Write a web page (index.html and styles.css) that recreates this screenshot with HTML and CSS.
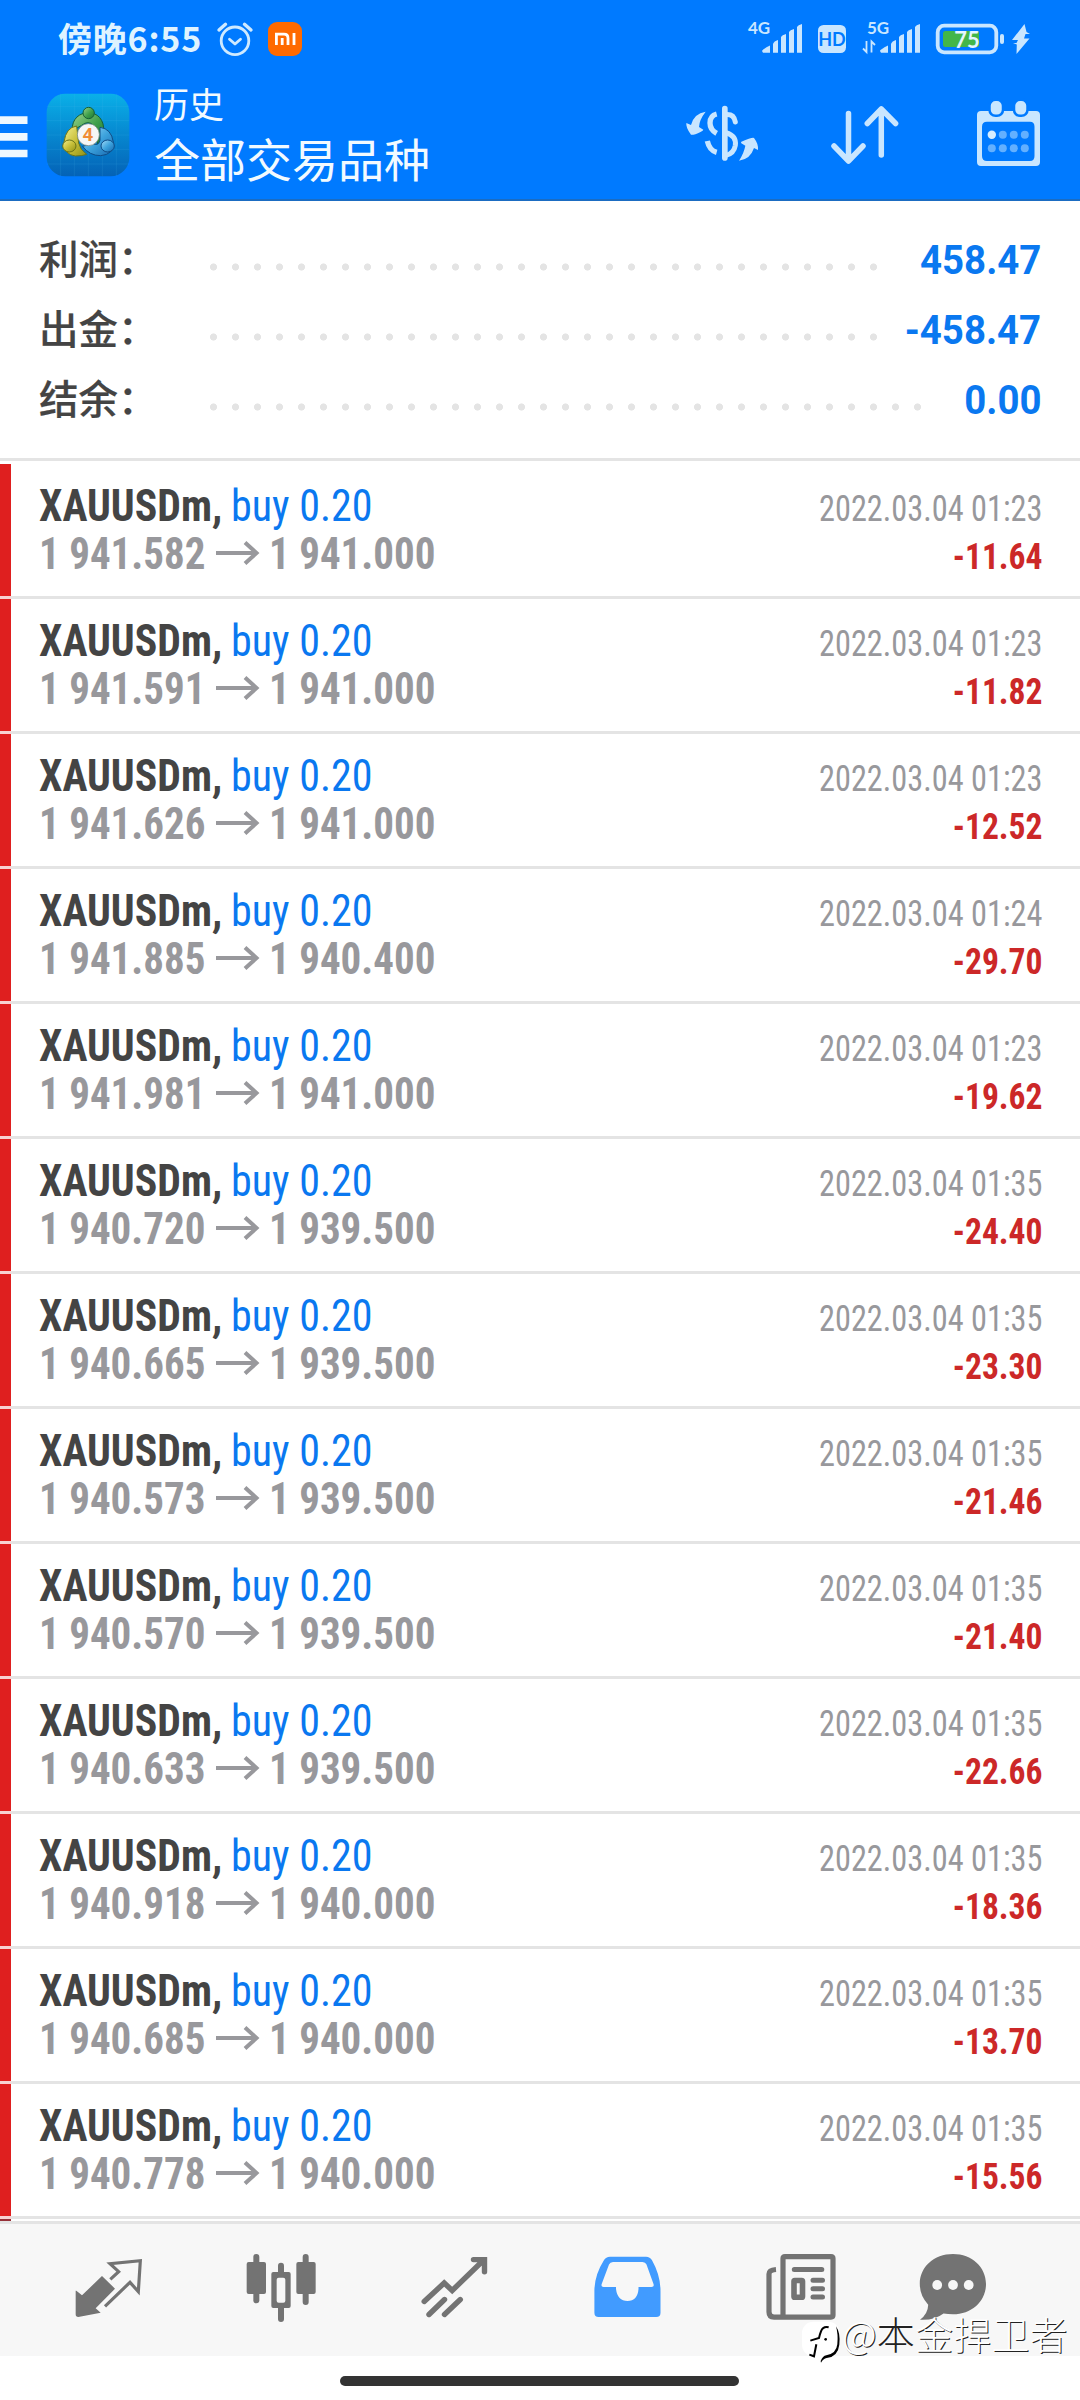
FILE: index.html
```html
<!DOCTYPE html>
<html lang="zh-CN">
<head>
<meta charset="utf-8">
<title>历史</title>
<link rel="stylesheet" href="styles.css">
</head>
<body>
<header class="header">
  <div class="status">
    <span class="clock">傍晚6:55</span>
    <svg class="alarm" viewBox="216 20 38 38" width="38" height="38" fill="none" stroke="#cfeaff" stroke-width="2.8" stroke-linecap="round" stroke-linejoin="round"><circle cx="235" cy="40.8" r="13.8"/><path d="M229.5 39.2l5.5 4.8 5.5-4.8"/><path stroke-width="3.4" d="M219 30l6.5-5.7M251 30l-6.5-5.7"/></svg>
    <svg class="mi" viewBox="268 22 34 34" width="34" height="34"><rect x="268" y="22" width="34" height="34" rx="9" fill="#ff6a00"/><path d="M276.4 45V34.2h7.6q4 0 4 4V45M282.2 38v7M294 33v12" fill="none" stroke="#fff" stroke-width="2.8"/></svg>
    <div class="status-right">
      <svg viewBox="745 10 60 48" width="60" height="48" fill="#c9e6ff"><text class="net" x="748" y="34">4G</text><path d="M762 51q0-1.500 8-5.500V52.700H763zM773 44q1-3 5-4V52.700H773zM781 37q1-2 5-3V52.700H781zM789 32q1-2 5-3V52.700H789zM797 27q1-2 5-3V52.700H797z"/></svg>
      <svg class="hd" viewBox="818 10 28 48" width="28" height="48"><rect x="818" y="25" width="28" height="28" rx="5.500" fill="#c9e6ff"/><text class="hd-text" x="832" y="46.200" text-anchor="middle">HD</text></svg>
      <svg class="five" viewBox="860 10 64 48" width="64" height="48" fill="#c9e6ff"><text class="net" x="867" y="34">5G</text><path d="M880 51q0-1.500 8-5.500V52.700H881zM891 44q1-3 5-4V52.700H891zM899 37q1-2 5-3V52.700H899zM907 32q1-2 5-3V52.700H907zM915 27q1-2 5-3V52.700H915z"/><path d="M866.500 41V52l-3.500-3.500M871.500 52.500V41.500l3.500 3.500" fill="none" stroke="#c9e6ff" stroke-width="1.800"/></svg>
      <svg class="battery" viewBox="934 10 72 48" width="72" height="48"><rect x="937.700" y="25.700" width="58.600" height="26.600" rx="6.500" fill="none" stroke="#c9e6ff" stroke-width="3.800"/><rect x="943" y="31" width="36" height="16" rx="2.500" fill="#43b649"/><rect x="1000" y="34" width="4" height="10" rx="2" fill="#c9e6ff"/><text class="bat-text" x="967" y="47.800" text-anchor="middle">75</text></svg>
      <svg viewBox="1008 10 24 48" width="24" height="48"><path d="M1024.500 24L1012 40h6l-1.500 3h-3.500l3.800 1.500-.3 9.500 13-15.500h-5.500l1.500-4.500h4.500l-3.500-2z" fill="#c9e6ff"/></svg>
    </div>
  </div>
  <div class="toolbar">
    <svg class="burger" viewBox="0 80 28 119" width="28" height="119" fill="#eef8ff"><path d="M0 116.300h27.500v7.800H0zM0 133h27.500v7.700H0zM0 149.700h27.500v7.500H0z"/></svg>
    <svg class="app" viewBox="18 15 252 252" width="84" height="84">
      <defs>
        <linearGradient id="tile" x1="0" y1="0" x2="0" y2="1"><stop offset="0" stop-color="#0ab0e8"/><stop offset=".45" stop-color="#078bd2"/><stop offset="1" stop-color="#0462b6"/></linearGradient>
        <linearGradient id="gr" x1="0" y1="0" x2="1" y2="1"><stop offset="0" stop-color="#9cd48c"/><stop offset=".55" stop-color="#3f9f4b"/><stop offset="1" stop-color="#1d7732"/></linearGradient>
        <linearGradient id="ye" x1="0" y1="0" x2="1" y2="1"><stop offset="0" stop-color="#f4ef8f"/><stop offset=".5" stop-color="#c8c03a"/><stop offset="1" stop-color="#8f9015"/></linearGradient>
        <linearGradient id="bl" x1="0" y1="0" x2="1" y2="1"><stop offset="0" stop-color="#a5dcf8"/><stop offset=".5" stop-color="#3da3dd"/><stop offset="1" stop-color="#1668b0"/></linearGradient>
      </defs>
      <rect x="20" y="17" width="248" height="248" rx="56" fill="url(#tile)"/>
      <path d="M62 17v248M103 17v248M145 17v248M187 17v248M229 17v248M20 55h248M20 98h248M20 141h248M20 184h248M20 228h248" stroke="#53c4f2" stroke-opacity=".2" stroke-width="2"/>
      <g stroke-width="3">
        <path d="M97 128C94 92 120 74 145 74s50 18 46 62q-2 20-18 32L160 112Q145 96 125 112z" fill="url(#gr)" stroke="#165f35"/>
        <path d="M180 118q34 4 40 44 2 38-38 41-34 0-54-28l30-8q18 8 22-10z" fill="url(#bl)" stroke="#0f4c86"/>
        <path d="M110 114q-32 4-38 48 0 38 34 42 22 0 34-5-20-14-24-34z" fill="url(#ye)" stroke="#6b7418"/>
        <circle cx="146" cy="75" r="17" fill="url(#gr)" stroke="#165f35"/>
        <ellipse cx="88" cy="174" rx="20" ry="18" fill="url(#ye)" stroke="#6b7418"/>
        <ellipse cx="203" cy="174" rx="20" ry="18" fill="url(#bl)" stroke="#0f4c86"/>
      </g>
      <circle cx="145" cy="140" r="33" fill="#f6f6f6" stroke="#6a8078" stroke-width="2"/>
      <text class="four" x="144" y="160" text-anchor="middle">4</text>
    </svg>
    <div class="titles"><div class="title-small">历史</div><div class="title-big">全部交易品种</div></div>
    <svg class="act" viewBox="0 0 300 240" width="100" height="80" fill="none" stroke="#c9e6ff" stroke-linecap="round"><path stroke-width="17" d="M164.500 41v148"/><path stroke-width="15" d="M168 59q24-2 28 22M168 113q32 10 28 38-4 24-28 30"/><path stroke-width="16" stroke-linecap="butt" d="M140 57q-20 5-20 27 0 20 20 31M112 138q6 28 28 34"/><path fill="#c9e6ff" stroke="none" d="M107 50Q72 55 63 90L49 84q-2 14 14 35 5 3 30-9 8-4 7-6L87 96q1-22 20-46zM207 197q34-4 45-38l12 6q2-18-12-36-5-3-38 11-2 3 0 5l12 7q-4 22-19 45z"/></svg>
    <svg class="act sort" viewBox="828 95 74 80" width="74" height="80" fill="none" stroke="#c9e6ff" stroke-width="5.500" stroke-linecap="round" stroke-linejoin="round"><path d="M848.500 113.500V160M834 146l14.500 15 14.500-15M881.300 155V109M867.300 123.500l14-14.500 14.300 14.500"/></svg>
    <svg class="act cal" viewBox="972 95 74 80" width="74" height="80"><path fill="#c9e6ff" fill-rule="evenodd" d="M981 111h55q4 0 4 4v47q0 4-4 4h-55q-4 0-4-4v-47q0-4 4-4zM987 121.700q-5 0-5 5V156q0 5 5 5h43q4.500 0 4.500-5v-29.300q0-5-4.500-5z"/><g fill="#c9e6ff" stroke="#007aff" stroke-width="2.500"><rect x="989.500" y="99.800" width="13.500" height="16" rx="6"/><rect x="1014" y="99.800" width="13.500" height="16" rx="6"/></g><g fill="#63b0ff"><circle cx="991.800" cy="134.700" r="4.200" fill="#d8eeff"/><circle cx="1002.800" cy="134.700" r="4"/><circle cx="1013.800" cy="134.700" r="4"/><circle cx="1024.800" cy="134.700" r="4"/><circle cx="991.800" cy="148.300" r="4"/><circle cx="1002.800" cy="148.300" r="4"/><circle cx="1013.800" cy="148.300" r="4"/><circle cx="1024.800" cy="148.300" r="4"/></g></svg>
  </div>
</header>
<section class="summary">
  <div class="sum-row"><span class="label">利润：</span><span class="dots"></span><span class="value">458.47</span></div>
  <div class="sum-row"><span class="label">出金：</span><span class="dots"></span><span class="value">-458.47</span></div>
  <div class="sum-row"><span class="label">结余：</span><span class="dots dots-long"></span><span class="value">0.00</span></div>
</section>
<svg class="defs" width="0" height="0"><symbol id="arrow" viewBox="0 0 44 26"><path d="M0 13h40M29 2.500L40.500 13 29 23.500" fill="none" stroke="#98989c" stroke-width="4"/></symbol></svg>
<main class="deals">
  <article class="deal"><div class="line"><b class="sym">XAUUSDm,</b><span class="side">buy 0.20</span><time class="time">2022.03.04 01:23</time></div><div class="line"><span class="price">1 941.582</span><svg class="arrow"><use href="#arrow"/></svg><span class="price">1 941.000</span><span class="loss">-11.64</span></div></article>
  <article class="deal"><div class="line"><b class="sym">XAUUSDm,</b><span class="side">buy 0.20</span><time class="time">2022.03.04 01:23</time></div><div class="line"><span class="price">1 941.591</span><svg class="arrow"><use href="#arrow"/></svg><span class="price">1 941.000</span><span class="loss">-11.82</span></div></article>
  <article class="deal"><div class="line"><b class="sym">XAUUSDm,</b><span class="side">buy 0.20</span><time class="time">2022.03.04 01:23</time></div><div class="line"><span class="price">1 941.626</span><svg class="arrow"><use href="#arrow"/></svg><span class="price">1 941.000</span><span class="loss">-12.52</span></div></article>
  <article class="deal"><div class="line"><b class="sym">XAUUSDm,</b><span class="side">buy 0.20</span><time class="time">2022.03.04 01:24</time></div><div class="line"><span class="price">1 941.885</span><svg class="arrow"><use href="#arrow"/></svg><span class="price">1 940.400</span><span class="loss">-29.70</span></div></article>
  <article class="deal"><div class="line"><b class="sym">XAUUSDm,</b><span class="side">buy 0.20</span><time class="time">2022.03.04 01:23</time></div><div class="line"><span class="price">1 941.981</span><svg class="arrow"><use href="#arrow"/></svg><span class="price">1 941.000</span><span class="loss">-19.62</span></div></article>
  <article class="deal"><div class="line"><b class="sym">XAUUSDm,</b><span class="side">buy 0.20</span><time class="time">2022.03.04 01:35</time></div><div class="line"><span class="price">1 940.720</span><svg class="arrow"><use href="#arrow"/></svg><span class="price">1 939.500</span><span class="loss">-24.40</span></div></article>
  <article class="deal"><div class="line"><b class="sym">XAUUSDm,</b><span class="side">buy 0.20</span><time class="time">2022.03.04 01:35</time></div><div class="line"><span class="price">1 940.665</span><svg class="arrow"><use href="#arrow"/></svg><span class="price">1 939.500</span><span class="loss">-23.30</span></div></article>
  <article class="deal"><div class="line"><b class="sym">XAUUSDm,</b><span class="side">buy 0.20</span><time class="time">2022.03.04 01:35</time></div><div class="line"><span class="price">1 940.573</span><svg class="arrow"><use href="#arrow"/></svg><span class="price">1 939.500</span><span class="loss">-21.46</span></div></article>
  <article class="deal"><div class="line"><b class="sym">XAUUSDm,</b><span class="side">buy 0.20</span><time class="time">2022.03.04 01:35</time></div><div class="line"><span class="price">1 940.570</span><svg class="arrow"><use href="#arrow"/></svg><span class="price">1 939.500</span><span class="loss">-21.40</span></div></article>
  <article class="deal"><div class="line"><b class="sym">XAUUSDm,</b><span class="side">buy 0.20</span><time class="time">2022.03.04 01:35</time></div><div class="line"><span class="price">1 940.633</span><svg class="arrow"><use href="#arrow"/></svg><span class="price">1 939.500</span><span class="loss">-22.66</span></div></article>
  <article class="deal"><div class="line"><b class="sym">XAUUSDm,</b><span class="side">buy 0.20</span><time class="time">2022.03.04 01:35</time></div><div class="line"><span class="price">1 940.918</span><svg class="arrow"><use href="#arrow"/></svg><span class="price">1 940.000</span><span class="loss">-18.36</span></div></article>
  <article class="deal"><div class="line"><b class="sym">XAUUSDm,</b><span class="side">buy 0.20</span><time class="time">2022.03.04 01:35</time></div><div class="line"><span class="price">1 940.685</span><svg class="arrow"><use href="#arrow"/></svg><span class="price">1 940.000</span><span class="loss">-13.70</span></div></article>
  <article class="deal"><div class="line"><b class="sym">XAUUSDm,</b><span class="side">buy 0.20</span><time class="time">2022.03.04 01:35</time></div><div class="line"><span class="price">1 940.778</span><svg class="arrow"><use href="#arrow"/></svg><span class="price">1 940.000</span><span class="loss">-15.56</span></div></article>
  <div class="deal-peek"></div>
</main>
<nav class="tabs">
  <svg viewBox="22 2224 173 132" width="173" height="132"><g transform="translate(60 2240) scale(.33333)"><path d="M49 152l17 14 60-58 39 38-58 59 15 13-67 13q-8 0-8-8v-71z" fill="#737373"/><path d="M151 118l25-23-26-24 91-9-6 93-25-28-75 72" fill="none" stroke="#737373" stroke-width="9.500"/></g></svg>
  <svg viewBox="195 2224 173 132" width="173" height="132"><g transform="translate(60 2240) scale(.33333)" fill="#737373"><rect x="560" y="66" width="58" height="96" rx="6"/><rect x="580" y="42" width="18" height="148" rx="9"/><rect x="709" y="66" width="58" height="96" rx="6"/><rect x="728" y="42" width="18" height="153" rx="9"/><rect x="634" y="96" width="58" height="108" rx="6"/><rect x="654" y="68" width="18" height="178" rx="9"/><rect x="650" y="113" width="26" height="75" rx="6" fill="#f7f7f7"/></g></svg>
  <svg viewBox="368 2224 173 132" width="173" height="132" fill="none" stroke="#737373" stroke-width="5.400" stroke-linecap="round"><path d="M424.200 2301.500l20-18.500 8 7.500 31.500-30.500M473.500 2259.600h11v12.200M429 2314.500l15.500-15M444.500 2314.500l15.800-15"/></svg>
  <svg viewBox="541 2224 173 132" width="173" height="132"><path fill="#419bff" fill-rule="evenodd" d="M610 2256.700h36q4 0 6 3.500 8.500 15 8.500 31v21.500q0 4.300-4.300 4.300h-57.500q-4.300 0-4.300-4.300v-21.500q0-16 9.500-31 2-3.500 6.100-3.500zM613 2262q-3 0-4 2.500l-7.300 19.500q-1 3 1.800 3H616v2q1.500 12 11.500 12t11-12v-2h13q3 0 2-3l-7-19.500q-1-2.500-4-2.500z"/></svg>
  <svg viewBox="714 2224 173 132" width="173" height="132" fill="none" stroke="#737373"><path stroke-width="5.200" d="M785 2256.600h46q2 0 2 2v56.500q0 2-2 2h-57q-5 0-5-5V2274q0-4 7-4.500"/><path stroke-width="5.200" d="M783 2317v-58.500q0-2 2-2"/><path stroke-width="5" stroke-linecap="round" d="M794.300 2269.500h27.500M813 2280.300h9.500M813 2288.700h9.500M813 2297h9.500"/><rect x="794" y="2280.500" width="8.500" height="16.700" rx=".8" stroke-width="5.600"/></svg>
  <svg viewBox="887 2224 173 132" width="173" height="132"><path fill="#737373" d="M953 2254c19 0 33 13 33 30s-14 30.300-33 30.300q-5 0-9.500-.8-9 7-23.500 6.200 8-6 8.200-15-8.400-9-8.400-20.700c0-17 14-30 33.200-30z"/><g fill="#f7f7f7"><circle cx="937.200" cy="2285" r="4.900"/><circle cx="953" cy="2285" r="4.900"/><circle cx="968.700" cy="2285" r="4.900"/></g></svg>
</nav>
<footer class="home"><div class="home-bar"></div></footer>
<div class="mark"><svg viewBox="30 28 120 136" width="40" height="45.300"><rect x="33" y="36" width="113" height="104" rx="34" fill="#fff"/><path d="M135 50q14 20 10 55-4 36-38 40-10 2-17 14l-1-5q6-15 17-17 30-5 33-33 3-30-4-54z"/><path d="M113 53q-17-4-23 12-4 10-6 20l-26 8M76 104l-7 36-14-5" fill="none" stroke="#000" stroke-width="6"/><circle cx="104" cy="89" r="4"/></svg><span>@<span class="mark-dark">本</span>金捍卫者</span></div>
</body>
</html>
```
FILE: styles.css
```css
* { box-sizing: border-box; }
body { margin: 0; width: 1080px; height: 2400px; position: relative; overflow: hidden; background: #fff; font-family: Roboto, "Noto Sans CJK SC", sans-serif; }
svg { display: block; flex: none; }
.defs { display: none; }

.header { height: 201px; background: #007aff; border-bottom: 2px solid #1b6cc2; }
.status { height: 80px; display: flex; align-items: flex-start; padding: 10px 48px 0 58px; }
.clock { width: 158px; margin-top: 9px; font: 700 34px/38px "Noto Sans CJK SC", sans-serif; color: #dff3ff; white-space: nowrap; letter-spacing: .8px; }
.alarm { margin-top: 10px; }
.mi { margin: 12px 0 0 14px; }
.status-right { margin-left: auto; display: flex; }
.hd { margin-left: 13px; }
.five { margin-left: 14px; }
.battery { margin: 0 2px 0 10px; }
.net { font: 700 17px Lato, sans-serif; }
.hd-text { font: 700 18px Lato, sans-serif; fill: #007aff; }
.bat-text { font: 700 22px Lato, sans-serif; fill: #e4f5ff; }

.toolbar { height: 119px; display: flex; align-items: flex-start; padding-right: 34px; }
.app { margin: 13px 0 0 18px; }
.four { font: 700 54px "Open Sans", sans-serif; fill: #f08c35; }
.titles { margin-left: 24px; width: 516px; font-family: "Noto Sans CJK SC", sans-serif; color: #f2faff; }
.title-small { font-size: 35px; line-height: 45px; }
.title-big { font-size: 46px; line-height: 64px; }
.act { margin-top: 15px; }
.sort { margin-left: 58px; }
.cal { margin-left: 70px; }

.summary { height: 260px; padding: 21px 39px 0; border-bottom: 3px solid #e4e4e4; }
.sum-row { height: 70px; line-height: 70px; display: flex; align-items: baseline; }
.label { width: 170px; font: 500 39.500px/70px "Noto Sans CJK SC", sans-serif; color: #444; white-space: nowrap; -webkit-text-stroke: .2px #444; }
.dots { width: 682px; height: 8px; align-self: center; margin-top: 20px; background: radial-gradient(circle at 4.500px 4px, #e4e4e4 3.200px, transparent 3.900px) 0 0 / 22px 8px repeat-x; }
.dots-long { width: 726px; }
.value { margin-left: auto; font-size: 40px; font-weight: 700; color: #0a78f0; transform: scaleX(.96); transform-origin: right; }

.deals { padding-top: 3px; font-family: "Roboto Condensed", sans-serif; }
.deal { height: 135px; padding: 18px 38px 0 28px; border-left: 11px solid #df1f1f; position: relative; }
.deal::after { content: ""; position: absolute; left: -11px; right: 0; bottom: 0; height: 3px; background: linear-gradient(90deg, #f8d2d2 11px, #e4e4e4 11px); }
.line { height: 48px; line-height: 48px; font-size: 44px; display: flex; align-items: baseline; white-space: nowrap; }
.sym, .side, .price { transform-origin: left; }
.sym { width: 192px; color: #444; transform: scaleX(.95); }
.side { color: #0a78f0; transform: scaleX(.955); }
.price { font-weight: 700; color: #98989c; width: 167px; transform: scaleX(.932); }
.arrow { width: 44px; height: 26px; margin: 0 9px 3px 10px; align-self: center; }
.time, .loss { margin-left: auto; font-size: 36.500px; transform-origin: right; }
.time { color: #98989c; transform: scaleX(.885); }
.loss { margin-right: -1px; font-weight: 700; color: #cc2828; transform: scaleX(.92); }
.deal-peek { height: 2px; border-left: 11px solid #963038; }

.tabs { height: 135px; display: flex; padding-left: 22px; background: #f7f7f7; border-top: 3px solid #e4e4e4; }
.home { height: 44px; padding-top: 20px; }
.home-bar { width: 399px; height: 10px; margin: 0 0 0 340px; border-radius: 5px; background: #333; }

.mark { position: absolute; left: 801px; top: 2319px; display: flex; font: 300 38px/38px "Noto Sans CJK SC", sans-serif; color: #fff; text-shadow: 1px 1px 0 #222; white-space: nowrap; }
.mark > span { margin: -5px 0 0 1px; letter-spacing: .2px; }
.mark-dark { color: #222; text-shadow: -1px -1px 0 #fff; }
```
